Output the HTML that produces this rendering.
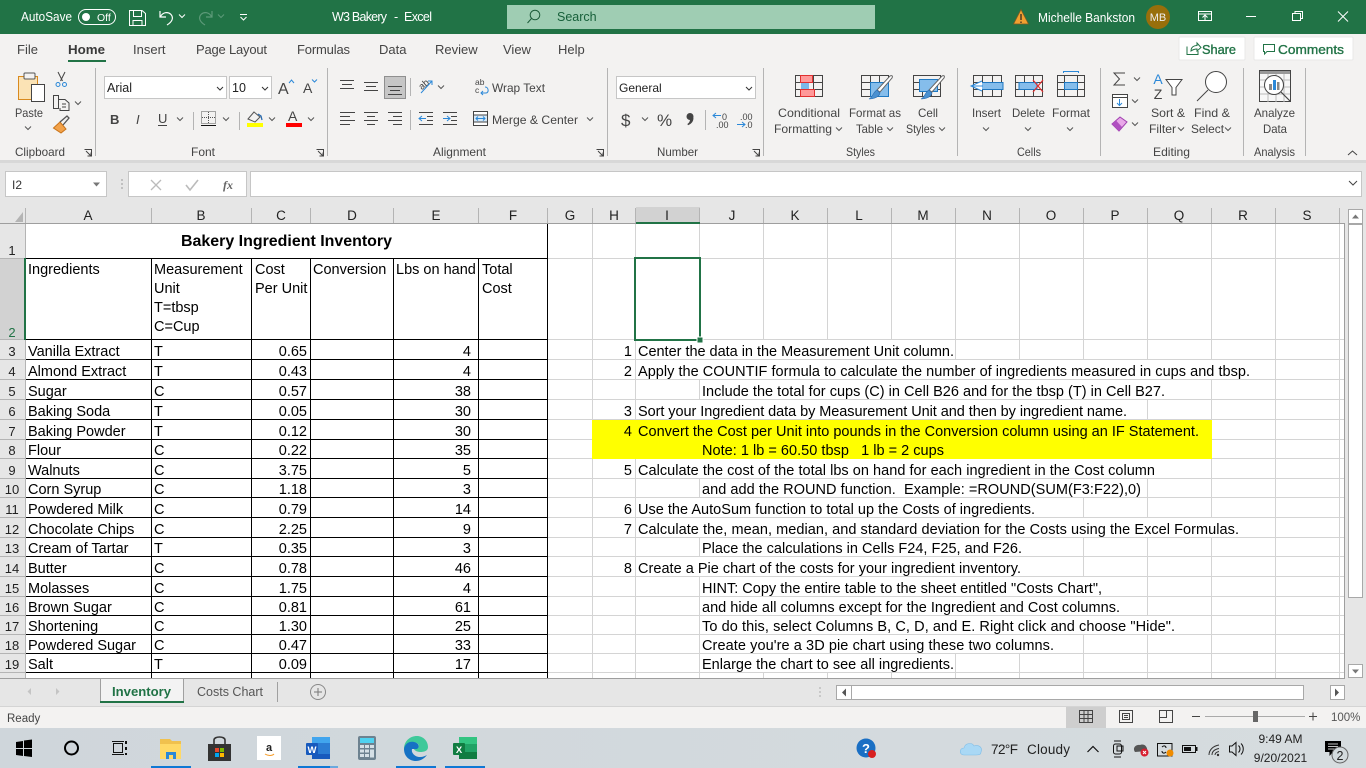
<!DOCTYPE html>
<html lang="en"><head><meta charset="utf-8"><title>W3 Bakery - Excel</title>
<style>
html,body{margin:0;padding:0;width:1366px;height:768px;overflow:hidden;background:#fff}
svg{display:block;position:absolute;left:0;top:0}
text{font-family:"Liberation Sans",sans-serif;white-space:pre}
.c{font-size:14.5px;fill:#000}
.r{text-anchor:end}
.h{font-size:13.5px;fill:#222;text-anchor:middle}
.n{font-size:13px;fill:#222;text-anchor:middle}
.u{font-size:12px;fill:#444}
.m{font-size:12px;fill:#444;text-anchor:middle}
.t{font-size:13px;fill:#444}
.w{font-size:12.5px;fill:#fff}
.ic{fill:none;stroke:#444;stroke-width:1}
.ch{fill:none;stroke:#555;stroke-width:1}
.k{fill:none;stroke:#333;stroke-width:1}
.g{stroke:#d4d4d4;stroke-width:1;shape-rendering:crispEdges}
.b{stroke:#000;stroke-width:1;shape-rendering:crispEdges}
.s{stroke:#b4b4b4;stroke-width:1;shape-rendering:crispEdges}
.bl{fill:none;stroke:#2b88d8;stroke-width:1}
</style></head><body>
<svg width="1366" height="768" viewBox="0 0 1366 768" xmlns="http://www.w3.org/2000/svg">
<defs>
<path id="cv" d="M-3 -1.5L0 1.5L3 -1.5"/>
<linearGradient id="tb" x1="0" x2="1" y1="0" y2="0"><stop offset="0" stop-color="#cfd6db"/><stop offset="1" stop-color="#d6dcdf"/></linearGradient>
</defs>
<!-- Title bar -->
<rect width="1366" height="34" fill="#217346"/>
<text class="w" x="21" y="21" textLength="51" lengthAdjust="spacingAndGlyphs">AutoSave</text>
<rect x="78.5" y="9.5" width="37" height="15" rx="7.5" fill="none" stroke="#fff"/>
<circle cx="86" cy="17" r="4" fill="#fff"/>
<text x="97" y="21" font-size="10.5" fill="#fff">Off</text>
<path d="M129.5 10.5H142L145.5 13.5V25.5H129.5ZM133.5 10.5V16.5H141.5V10.5M133 25.5V20.5H142V25.5" fill="none" stroke="#fff"/>
<path d="M160 11V17H166M160.5 16.5C163 12 168 11.5 171 14.5C174 18 172 22 167 25" fill="none" stroke="#fff" stroke-width="1.2"/>
<use href="#cv" x="182" y="16" fill="none" stroke="#fff"/>
<path d="M212 11V17H206M211.5 16.5C209 12 204 11.5 201 14.5C198 18 200 22 205 25" fill="none" stroke="#5d9a79" stroke-width="1.2"/>
<use href="#cv" x="221" y="16" fill="none" stroke="#5d9a79"/>
<path d="M240 14.5H247" stroke="#fff"/><path d="M240.5 17L243.5 20L246.5 17" fill="none" stroke="#fff"/>
<text x="332" y="21" font-size="12.5" fill="#fff" textLength="55" lengthAdjust="spacing">W3 Bakery</text>
<text x="394" y="21" font-size="12.5" fill="#fff">-</text>
<text x="404" y="21" font-size="12.5" fill="#fff" textLength="28" lengthAdjust="spacing">Excel</text>
<rect x="507" y="5" width="368" height="24" fill="#9fcdb3"/>
<circle cx="535" cy="15" r="4.8" fill="none" stroke="#1d5c3a"/><path d="M531.5 18.5L527.5 23" stroke="#1d5c3a" fill="none"/>
<text x="557" y="21" font-size="12.5" fill="#17603a">Search</text>
<path d="M1021 9.5L1028.5 24H1013.5Z" fill="#f0a030" stroke="#7a5a20" stroke-width=".8"/><path d="M1021 14V20M1021 21.5V23" stroke="#222" stroke-width="1.2"/>
<text class="w" x="1038" y="22" textLength="97" lengthAdjust="spacingAndGlyphs">Michelle Bankston</text>
<circle cx="1158" cy="17" r="12" fill="#986f0b"/><text x="1158" y="21" font-size="11" fill="#eee" text-anchor="middle">MB</text>
<path d="M1198.5 11.5H1211.5V20.5H1198.5ZM1198.5 14H1211.5M1205 20V15.5M1202.5 17.5L1205 15L1207.5 17.5" fill="none" stroke="#fff"/>
<path d="M1246 16.5H1256" stroke="#fff"/>
<path d="M1292.5 13.5H1300.5V20.5H1292.5ZM1295 13V11.5H1302.5V18.5H1301" fill="none" stroke="#fff"/>
<path d="M1338 11.5L1348 21.5M1348 11.5L1338 21.5" stroke="#fff" fill="none"/>
<!-- Ribbon -->
<rect y="34" width="1366" height="126" fill="#f3f2f1"/>
<rect y="160" width="1366" height="45" fill="#e6e6e6"/>
<rect y="160" width="1366" height="3" fill="#d8d8d8"/>
<text class="t" x="17" y="54">File</text>
<text x="68" y="54" font-size="13" font-weight="bold" fill="#3a3a3a" textLength="37" lengthAdjust="spacingAndGlyphs">Home</text>
<rect x="68" y="60" width="38" height="2" fill="#217346"/>
<text class="t" x="133" y="54">Insert</text>
<text class="t" x="196" y="54" textLength="71" lengthAdjust="spacing">Page Layout</text>
<text class="t" x="297" y="54" textLength="53" lengthAdjust="spacing">Formulas</text>
<text class="t" x="379" y="54">Data</text>
<text class="t" x="435" y="54">Review</text>
<text class="t" x="503" y="54">View</text>
<text class="t" x="558" y="54">Help</text>
<rect x="1179" y="37" width="66" height="23" rx="1" fill="#fff" stroke="#e8e8e8"/>
<path d="M1187 46.5V54.5H1198V51M1191 51C1191 47 1194 45.5 1197 45.5V43L1201 47.5L1197 51V49C1195 49 1193 49.5 1191 51Z" fill="none" stroke="#217346"/>
<text x="1202" y="54" font-size="13" fill="#217346" stroke="#217346" stroke-width=".35" textLength="34" lengthAdjust="spacingAndGlyphs">Share</text>
<rect x="1254" y="37" width="99" height="23" rx="1" fill="#fff" stroke="#e8e8e8"/>
<path d="M1263.5 44.5H1274.5V51.5H1267L1264.5 54V51.5H1263.5Z" fill="none" stroke="#217346"/>
<text x="1278" y="54" font-size="13" fill="#217346" stroke="#217346" stroke-width=".35" textLength="66" lengthAdjust="spacingAndGlyphs">Comments</text>
<g class="s"><path d="M95.5 68V156M327.5 68V156M607.5 68V156M763.5 68V156M957.5 68V156M1100.5 68V156M1243.5 68V156M1305.5 68V156"/></g>
<!-- Clipboard -->
<rect x="18.5" y="76.5" width="19" height="23" fill="#fbe3b5" stroke="#d98a1e"/>
<rect x="24" y="73" width="11" height="6" rx="1" fill="#f3f2f1" stroke="#555"/>
<rect x="31.5" y="84.5" width="13" height="17" fill="#fff" stroke="#444"/>
<text class="u" x="15" y="117" textLength="28" lengthAdjust="spacingAndGlyphs">Paste</text>
<use href="#cv" x="28" y="128" class="ch"/>
<path d="M58 72L62.5 81M65 72L60.5 81" class="ic"/><circle cx="58" cy="84.5" r="2" fill="none" stroke="#2b88d8"/><circle cx="64.5" cy="84.5" r="2" fill="none" stroke="#2b88d8"/>
<path d="M53.5 95.5H58.5V108.5H53.5ZM58.5 99.5H65L69 103V110.5H60V108" class="ic"/><path d="M62 104H66M62 107H66" class="ic"/>
<use href="#cv" x="78" y="103" class="ch"/>
<path d="M53.5 128L60 122L66 129L61 133Z" fill="#f2a24a" stroke="#c9741a"/><path d="M60 122L67 116L69 118L63 125" fill="none" stroke="#555" stroke-width="1.3"/>
<text class="u" x="15" y="156" textLength="50" lengthAdjust="spacingAndGlyphs">Clipboard</text>
<path d="M84.5 149.5H91.5V156.5M86 151L91 156M91 152.5V156H87.5" class="ic" stroke-width=".8"/>
<!-- Font -->
<rect x="104.5" y="76.5" width="122" height="22" fill="#fff" stroke="#c6c6c6"/>
<text x="107" y="92" font-size="12.5" fill="#222">Arial</text><use href="#cv" x="220" y="88.5" class="k"/>
<rect x="229.5" y="76.5" width="42" height="22" fill="#fff" stroke="#c6c6c6"/>
<text x="232" y="92" font-size="12.5" fill="#222">10</text><use href="#cv" x="265" y="88.5" class="k"/>
<text x="278" y="94" font-size="16" fill="#444">A</text><path d="M289 83L291.5 80L294 83" fill="none" stroke="#2b88d8"/>
<text x="303" y="93" font-size="14" fill="#444">A</text><path d="M312 79.5L314.5 82L317 79.5" fill="none" stroke="#2b88d8"/>
<text x="110" y="124" font-size="13" font-weight="bold" fill="#444">B</text>
<text x="136" y="124" font-size="13" font-style="italic" fill="#444">I</text>
<text x="158" y="123" font-size="13" fill="#444">U</text><path d="M158 125.5H167" stroke="#444"/><use href="#cv" x="180" y="119" class="ch"/>
<g stroke="#555" stroke-dasharray="1 1" fill="none"><rect x="201.5" y="111.5" width="14" height="12"/><path d="M208.5 112V124M202 117.5H215"/></g><path d="M201 125.5H216" stroke="#111"/><use href="#cv" x="226" y="119" class="ch"/>
<path d="M248 119L254 112L260 117L255 122Z" fill="none" stroke="#555"/><path d="M258 114L261 116L262 120" fill="none" stroke="#2b6cb0" stroke-width="1.3"/>
<rect x="247" y="123" width="16" height="4" fill="#ff0"/><use href="#cv" x="272" y="119" class="ch"/>
<text x="288" y="121" font-size="14" fill="#444">A</text><rect x="286" y="123" width="16" height="4" fill="#f00"/><use href="#cv" x="311" y="119" class="ch"/>
<path d="M193.5 112V130M239.5 112V130" class="s"/>
<text class="u" x="191" y="156" textLength="24" lengthAdjust="spacingAndGlyphs">Font</text>
<path d="M316.5 149.5H323.5V156.5M318 151L323 156M323 152.5V156H319.5" class="ic" stroke-width=".8"/>
<!-- Alignment -->
<g class="ic" stroke="#444"><path d="M340 80.5H354M342 84.5H352M340 88.5H354"/><path d="M364 82.5H378M366 86.5H376M364 90.5H378"/></g>
<rect x="384.5" y="76.5" width="21" height="22" fill="#c6c6c6" stroke="#8f8f8f"/>
<path d="M388 86.5H402M390 90.5H400M388 94.5H402" class="ic"/>
<path d="M410.5 78V96M410.5 110V130" class="s"/>
<text x="418" y="88" font-size="9.5" fill="#444" transform="rotate(-40 423 84)">ab</text><path d="M421 93L432 81M428 81H432V85" fill="none" stroke="#2b88d8"/>
<use href="#cv" x="441" y="87" class="ch"/>
<g class="ic"><path d="M340 112.5H355M340 116.5H350M340 120.5H355M340 124.5H350"/><path d="M364 112.5H378M367 116.5H375M364 120.5H378M367 124.5H375"/><path d="M388 112.5H402M393 116.5H402M388 120.5H402M393 124.5H402"/></g>
<path d="M419 112.5H433M427 116.5H433M427 120.5H433M419 124.5H433M443 112.5H457M451 116.5H457M451 120.5H457M443 124.5H457" class="ic"/>
<path d="M426 118.5H419M422 116L419 118.5L422 121M443 118.5H450M447 116L450 118.5L447 121" fill="none" stroke="#2b88d8"/>
<text x="475" y="85" font-size="8.5" fill="#444">ab</text><text x="475" y="93" font-size="8.5" fill="#444">c</text><path d="M481 93H486C489 93 489 87 485 87" fill="none" stroke="#2b88d8"/><path d="M483 91L481 93L483 95" fill="none" stroke="#2b88d8"/>
<text class="u" x="492" y="92" textLength="53" lengthAdjust="spacingAndGlyphs">Wrap Text</text>
<rect x="473.5" y="111.5" width="14" height="14" fill="#fff" stroke="#444"/><path d="M474 115H487M474 122H487" stroke="#444"/><rect x="474" y="115.5" width="13" height="6" fill="#d6e9f8"/><path d="M476 118.5H485M478 116.5L476 118.5L478 120.5M483 116.5L485 118.5L483 120.5" fill="none" stroke="#2b88d8"/>
<text class="u" x="492" y="124" textLength="86" lengthAdjust="spacingAndGlyphs">Merge &amp; Center</text>
<use href="#cv" x="590" y="119" class="ch"/>
<text class="u" x="433" y="156" textLength="53" lengthAdjust="spacingAndGlyphs">Alignment</text>
<path d="M596.5 149.5H603.5V156.5M598 151L603 156M603 152.5V156H599.5" class="ic" stroke-width=".8"/>
<!-- Number -->
<rect x="616.5" y="76.5" width="139" height="22" fill="#fff" stroke="#c6c6c6"/>
<text x="619" y="92" font-size="12" fill="#222">General</text><use href="#cv" x="749" y="88.5" class="k"/>
<text x="621" y="126" font-size="17" fill="#444">$</text><use href="#cv" x="645" y="119" class="ch"/>
<text x="657" y="126" font-size="17" fill="#444">%</text>
<circle cx="690" cy="116.5" r="3.5" fill="#444"/><path d="M693.4 117.5C693.8 121 691.5 124 688 125.2L687.4 124C689 123 690 121.5 690 119.5Z" fill="#444"/>
<path d="M705.5 110V130" class="s"/>
<text x="722" y="120" font-size="9" fill="#444">0</text><text x="716" y="128" font-size="9" fill="#444">.00</text><path d="M721 115.5H713M716 113L713 115.5L716 118" fill="none" stroke="#2b88d8"/>
<text x="740" y="120" font-size="9" fill="#444">.00</text><text x="745" y="128" font-size="9" fill="#444">.0</text><path d="M737 124.5H745M742 122L745 124.5L742 127" fill="none" stroke="#2b88d8"/>
<text class="u" x="657" y="156" textLength="41" lengthAdjust="spacingAndGlyphs">Number</text>
<path d="M752.5 149.5H759.5V156.5M754 151L759 156M759 152.5V156H755.5" class="ic" stroke-width=".8"/>
<!-- Styles -->
<g fill="none" stroke="#444"><rect x="795.5" y="75.5" width="27" height="21"/><path d="M795 82.5H823M795 89.5H823M804.5 75V97M813.5 75V97"/></g>
<rect x="800.5" y="75.5" width="12" height="7" fill="#f99" stroke="#e03030"/><rect x="800.5" y="89.5" width="14" height="7" fill="#f99" stroke="#e03030"/><rect x="801" y="83" width="8" height="6" fill="#7cb8e8"/>
<text class="m" x="809" y="117" textLength="62" lengthAdjust="spacingAndGlyphs">Conditional</text>
<text class="u" x="774" y="133" textLength="58" lengthAdjust="spacingAndGlyphs">Formatting</text><use href="#cv" x="839" y="129" class="ch"/>
<g fill="none" stroke="#444"><rect x="861.5" y="75.5" width="27" height="21"/><path d="M861 82.5H889M861 89.5H889M870.5 75V97M879.5 75V97"/></g>
<rect x="870.5" y="82.5" width="18" height="14" fill="#85bdeb" stroke="#1f78c1"/>
<path d="M890 76C892 75 893 76 892 78L880 92L877 90Z" fill="#fff" stroke="#666"/><path d="M877 90L880 93C879 97 874 99 869 99C873 97 873 92 877 90Z" fill="#4a90d0" stroke="#2b6cb0" stroke-width=".6"/>
<text class="u" x="849" y="117" textLength="52" lengthAdjust="spacingAndGlyphs">Format as</text>
<text class="u" x="856" y="133" textLength="27" lengthAdjust="spacingAndGlyphs">Table</text><use href="#cv" x="890" y="129" class="ch"/>
<g fill="none" stroke="#444"><rect x="913.5" y="75.5" width="27" height="21"/><path d="M913 82.5H941M913 89.5H941M922.5 89V97M931.5 89V97"/></g>
<rect x="919.5" y="79.5" width="18" height="12" fill="#85bdeb" stroke="#1f78c1"/>
<path d="M942 76C944 75 945 76 944 78L932 92L929 90Z" fill="#fff" stroke="#666"/><path d="M929 90L932 93C931 97 926 99 921 99C925 97 925 92 929 90Z" fill="#4a90d0" stroke="#2b6cb0" stroke-width=".6"/>
<text class="u" x="918" y="117" textLength="20" lengthAdjust="spacingAndGlyphs">Cell</text>
<text class="u" x="906" y="133" textLength="29" lengthAdjust="spacingAndGlyphs">Styles</text><use href="#cv" x="942" y="129" class="ch"/>
<text class="u" x="846" y="156" textLength="29" lengthAdjust="spacingAndGlyphs">Styles</text>
<!-- Cells -->
<g fill="none" stroke="#444"><rect x="973.5" y="75.5" width="28" height="21"/><path d="M973 82.5H1002M973 89.5H1002M982.5 75V97M992.5 75V97"/></g>
<rect x="981" y="82.5" width="22" height="7" fill="#85bdeb" stroke="#1f78c1"/>
<path d="M982 81L971 86L982 91M972 86H983" fill="#fff" stroke="#2b88d8"/>
<text class="u" x="972" y="117" textLength="29" lengthAdjust="spacingAndGlyphs">Insert</text><use href="#cv" x="986" y="129" class="ch"/>
<g fill="none" stroke="#444"><rect x="1015.5" y="75.5" width="27" height="21"/><path d="M1015 82.5H1043M1015 89.5H1043M1024.5 75V97M1033.5 75V97"/></g>
<rect x="1019" y="82.5" width="18" height="7" fill="#85bdeb" stroke="#1f78c1"/>
<path d="M1033 80L1043 92M1043 80L1033 92" stroke="#e03030" fill="none" stroke-width="1.2"/>
<text class="u" x="1012" y="117" textLength="33" lengthAdjust="spacingAndGlyphs">Delete</text><use href="#cv" x="1028" y="129" class="ch"/>
<path d="M1063.5 71V73M1078.5 71V73M1063 71.5H1079" stroke="#2b88d8" fill="none"/>
<g fill="none" stroke="#444"><rect x="1057.5" y="75.5" width="27" height="21"/><path d="M1057 82.5H1085M1057 89.5H1085M1064.5 75V97M1077.5 75V97"/></g>
<rect x="1064.5" y="82.5" width="13" height="7" fill="#85bdeb" stroke="#1f78c1"/>
<text class="u" x="1052" y="117" textLength="38" lengthAdjust="spacingAndGlyphs">Format</text><use href="#cv" x="1070" y="129" class="ch"/>
<text class="u" x="1017" y="156" textLength="24" lengthAdjust="spacingAndGlyphs">Cells</text>
<!-- Editing -->
<path d="M1125 73H1114L1119.5 79L1114 85H1125" fill="none" stroke="#444"/><use href="#cv" x="1137" y="79" class="ch"/>
<rect x="1112.5" y="94.5" width="15" height="13" fill="#fff" stroke="#444"/><path d="M1112 97.5H1128" stroke="#444"/><path d="M1119.5 99V105M1117 103L1119.5 105.5L1122 103" fill="none" stroke="#2b88d8"/><use href="#cv" x="1135" y="101" class="ch"/>
<path d="M1112 124L1120 117L1127 122L1119 131Z" fill="#e8a8e8" stroke="#a040b0"/><path d="M1112 124L1116 120.5L1122 127L1119 131Z" fill="#b050c0"/><use href="#cv" x="1135" y="124" class="ch"/>
<text x="1158" y="84" font-size="14" fill="#2b88d8" text-anchor="middle">A</text><text x="1158" y="99" font-size="14" fill="#444" text-anchor="middle">Z</text>
<path d="M1166 79.5H1182L1176 87.5V95H1172V87.5Z" fill="#fff" stroke="#444"/>
<text class="u" x="1151" y="117" textLength="34" lengthAdjust="spacingAndGlyphs">Sort &amp;</text><text class="u" x="1149" y="133" textLength="27" lengthAdjust="spacingAndGlyphs">Filter</text><use href="#cv" x="1181" y="129" class="ch"/>
<circle cx="1216" cy="82" r="10.5" fill="#fff" stroke="#444"/><path d="M1208 90L1197 101" stroke="#444" fill="none"/>
<text class="u" x="1194" y="117" textLength="36" lengthAdjust="spacingAndGlyphs">Find &amp;</text><text class="u" x="1191" y="133" textLength="33" lengthAdjust="spacingAndGlyphs">Select</text><use href="#cv" x="1228" y="129" class="ch"/>
<text class="u" x="1153" y="156" textLength="37" lengthAdjust="spacingAndGlyphs">Editing</text>
<!-- Analysis -->
<rect x="1259.5" y="70.5" width="31" height="31" fill="#f7f7f7" stroke="#444"/><rect x="1260" y="71" width="30" height="3" fill="#999"/>
<path d="M1260 80H1290M1260 87H1290M1260 94H1290M1268 74V102M1276 74V102M1284 74V102" stroke="#bbb" fill="none"/>
<circle cx="1274" cy="85" r="9.5" fill="#fff" stroke="#444"/><rect x="1269" y="84" width="3" height="6" fill="#888"/><rect x="1273" y="80" width="3" height="10" fill="#2b88d8"/><rect x="1277" y="82" width="2.5" height="8" fill="#888"/>
<path d="M1281 92L1290 101" stroke="#444" fill="none" stroke-width="1.2"/>
<text class="u" x="1254" y="117" textLength="41" lengthAdjust="spacingAndGlyphs">Analyze</text><text class="u" x="1263" y="133" textLength="24" lengthAdjust="spacingAndGlyphs">Data</text>
<text class="u" x="1254" y="156" textLength="41" lengthAdjust="spacingAndGlyphs" style="letter-spacing:0">Analysis</text>
<path d="M1348 155L1352.5 151L1357 155" fill="none" stroke="#444"/>
<!-- Formula bar -->
<rect x="5.5" y="171.5" width="101" height="25" fill="#fff" stroke="#c6c6c6"/>
<text x="12" y="189" font-size="12" fill="#333">I2</text>
<path d="M93 182.5H100L96.5 186.5Z" fill="#777"/>
<path d="M122 179V181M122 183V185M122 187V189" stroke="#999"/>
<rect x="128.5" y="171.5" width="118" height="25" fill="#fff" stroke="#c6c6c6"/>
<path d="M151 180L161 190M161 180L151 190" stroke="#bbb" stroke-width="1.3" fill="none"/>
<path d="M186 185L190 190L198 180" stroke="#bbb" stroke-width="1.6" fill="none"/>
<text x="223" y="189" font-size="12" font-style="italic" fill="#666" font-weight="bold" style="font-family:'Liberation Serif',serif">fx</text>
<rect x="250.5" y="171.5" width="1111" height="25" fill="#fff" stroke="#c6c6c6"/>
<path d="M1349 181L1353 185L1357 181" fill="none" stroke="#444"/>
<!-- Sheet background -->
<rect x="0" y="205" width="1366" height="523" fill="#e6e6e6"/>
<rect x="25" y="224" width="1320" height="454" fill="#fff"/>
<!-- headers -->
<rect x="636" y="207" width="64" height="16" fill="#d2d2d2"/>
<rect x="0" y="258" width="25" height="82" fill="#d2d2d2"/>
<path d="M15 222L23 222L23 212Z" fill="#b4b4b4"/>
<g class="s"><path d="M25.5 208V223M151.5 208V223M251.5 208V223M310.5 208V223M393.5 208V223M478.5 208V223M547.5 208V223M592.5 208V223M635.5 208V223M699.5 208V223M763.5 208V223M827.5 208V223M891.5 208V223M955.5 208V223M1019.5 208V223M1083.5 208V223M1147.5 208V223M1211.5 208V223M1275.5 208V223M1339.5 208V223"/>
<path d="M25.5 224V678M0 258.5H25M0 339.5H25M0 359.5H25M0 379.5H25M0 399.5H25M0 419.5H25M0 439.5H25M0 458.5H25M0 478.5H25M0 497.5H25M0 517.5H25M0 537.5H25M0 556.5H25M0 576.5H25M0 596.5H25M0 615.5H25M0 634.5H25M0 653.5H25M0 672.5H25"/></g>
<path d="M0 223.5H1344.5V678.5H0" fill="none" stroke="#9e9e9e" shape-rendering="crispEdges"/>
<rect x="24" y="258" width="2" height="82" fill="#217346"/>
<rect x="636" y="222" width="64" height="2" fill="#217346"/>
<text class="h" x="88" y="220">A</text><text class="h" x="201" y="220">B</text><text class="h" x="281" y="220">C</text><text class="h" x="352" y="220">D</text><text class="h" x="436" y="220">E</text><text class="h" x="513" y="220">F</text><text class="h" x="570" y="220">G</text><text class="h" x="614" y="220">H</text><text class="h" x="667" y="220">I</text><text class="h" x="732" y="220">J</text><text class="h" x="795" y="220">K</text><text class="h" x="859" y="220">L</text><text class="h" x="923" y="220">M</text><text class="h" x="987" y="220">N</text><text class="h" x="1051" y="220">O</text><text class="h" x="1115" y="220">P</text><text class="h" x="1179" y="220">Q</text><text class="h" x="1243" y="220">R</text><text class="h" x="1307" y="220">S</text>
<text class="n" x="12" y="255">1</text><text class="n" x="12" y="337" style="fill:#217346">2</text><text class="n" x="12" y="356">3</text><text class="n" x="12" y="376">4</text><text class="n" x="12" y="396">5</text><text class="n" x="12" y="416">6</text><text class="n" x="12" y="436">7</text><text class="n" x="12" y="455">8</text><text class="n" x="12" y="475">9</text><text class="n" x="12" y="494">10</text><text class="n" x="12" y="514">11</text><text class="n" x="12" y="534">12</text><text class="n" x="12" y="553">13</text><text class="n" x="12" y="573">14</text><text class="n" x="12" y="593">15</text><text class="n" x="12" y="612">16</text><text class="n" x="12" y="631">17</text><text class="n" x="12" y="650">18</text><text class="n" x="12" y="669">19</text>
<!-- Right gridlines -->
<g class="g"><path d="M592.5 224V678M635.5 224V678M699.5 224V678M763.5 224V678M827.5 224V678M891.5 224V678M955.5 224V678M1019.5 224V678M1083.5 224V678M1147.5 224V678M1211.5 224V678M1275.5 224V678M1339.5 224V678"/>
<path d="M548 258.5H1344M548 339.5H1344M548 359.5H1344M548 379.5H1344M548 399.5H1344M548 419.5H1344M548 439.5H1344M548 458.5H1344M548 478.5H1344M548 497.5H1344M548 517.5H1344M548 537.5H1344M548 556.5H1344M548 576.5H1344M548 596.5H1344M548 615.5H1344M548 634.5H1344M548 653.5H1344M548 672.5H1344"/></g>
<!-- overflow covers -->
<g fill="#fff"><rect x="636" y="340" width="319" height="19"/><rect x="636" y="360" width="639" height="19"/><rect x="700" y="380" width="511" height="19"/><rect x="636" y="400" width="511" height="19"/><rect x="636" y="459" width="575" height="19"/><rect x="700" y="479" width="447" height="18"/><rect x="636" y="498" width="447" height="19"/><rect x="636" y="518" width="639" height="19"/><rect x="700" y="538" width="383" height="18"/><rect x="636" y="557" width="447" height="19"/><rect x="700" y="577" width="447" height="19"/><rect x="700" y="597" width="447" height="18"/><rect x="700" y="616" width="511" height="18"/><rect x="700" y="635" width="383" height="18"/><rect x="700" y="654" width="255" height="18"/></g>
<rect x="592" y="420" width="620" height="39" fill="#ff0"/>
<!-- Table lines -->
<g class="b"><path d="M26 258.5H548M26 339.5H548M26 359.5H548M26 379.5H548M26 399.5H548M26 419.5H548M26 439.5H548M26 458.5H548M26 478.5H548M26 497.5H548M26 517.5H548M26 537.5H548M26 556.5H548M26 576.5H548M26 596.5H548M26 615.5H548M26 634.5H548M26 653.5H548M26 672.5H548"/>
<path d="M547.5 224V678M151.5 258V678M251.5 258V678M310.5 258V678M393.5 258V678M478.5 258V678"/></g>
<!-- selected cell -->
<rect x="635" y="258" width="65" height="82" fill="#fff" stroke="#217346" stroke-width="2"/>
<rect x="697" y="337" width="6" height="6" fill="#217346" stroke="#fff" stroke-width="1"/>
<!-- Table text -->
<text x="286.5" y="246" font-size="16" font-weight="bold" fill="#000" text-anchor="middle" textLength="211" lengthAdjust="spacingAndGlyphs">Bakery Ingredient Inventory</text>
<text class="c" x="28" y="274">Ingredients</text>
<text class="c" x="154" y="274">Measurement</text><text class="c" x="154" y="293">Unit</text><text class="c" x="154" y="312">T=tbsp</text><text class="c" x="154" y="331">C=Cup</text>
<text class="c" x="255" y="274">Cost</text><text class="c" x="255" y="293">Per Unit</text>
<text class="c" x="313" y="274">Conversion</text><text class="c" x="396" y="274">Lbs on hand</text>
<text class="c" x="482" y="274">Total</text><text class="c" x="482" y="293">Cost</text>
<g class="c">
<text class="c" x="28" y="356">Vanilla Extract</text><text class="c" x="154" y="356">T</text><text class="c r" x="307" y="356">0.65</text><text class="c r" x="471" y="356">4</text>
<text class="c" x="28" y="376">Almond Extract</text><text class="c" x="154" y="376">T</text><text class="c r" x="307" y="376">0.43</text><text class="c r" x="471" y="376">4</text>
<text class="c" x="28" y="396">Sugar</text><text class="c" x="154" y="396">C</text><text class="c r" x="307" y="396">0.57</text><text class="c r" x="471" y="396">38</text>
<text class="c" x="28" y="416">Baking Soda</text><text class="c" x="154" y="416">T</text><text class="c r" x="307" y="416">0.05</text><text class="c r" x="471" y="416">30</text>
<text class="c" x="28" y="436">Baking Powder</text><text class="c" x="154" y="436">T</text><text class="c r" x="307" y="436">0.12</text><text class="c r" x="471" y="436">30</text>
<text class="c" x="28" y="455">Flour</text><text class="c" x="154" y="455">C</text><text class="c r" x="307" y="455">0.22</text><text class="c r" x="471" y="455">35</text>
<text class="c" x="28" y="475">Walnuts</text><text class="c" x="154" y="475">C</text><text class="c r" x="307" y="475">3.75</text><text class="c r" x="471" y="475">5</text>
<text class="c" x="28" y="494">Corn Syrup</text><text class="c" x="154" y="494">C</text><text class="c r" x="307" y="494">1.18</text><text class="c r" x="471" y="494">3</text>
<text class="c" x="28" y="514">Powdered Milk</text><text class="c" x="154" y="514">C</text><text class="c r" x="307" y="514">0.79</text><text class="c r" x="471" y="514">14</text>
<text class="c" x="28" y="534">Chocolate Chips</text><text class="c" x="154" y="534">C</text><text class="c r" x="307" y="534">2.25</text><text class="c r" x="471" y="534">9</text>
<text class="c" x="28" y="553">Cream of Tartar</text><text class="c" x="154" y="553">T</text><text class="c r" x="307" y="553">0.35</text><text class="c r" x="471" y="553">3</text>
<text class="c" x="28" y="573">Butter</text><text class="c" x="154" y="573">C</text><text class="c r" x="307" y="573">0.78</text><text class="c r" x="471" y="573">46</text>
<text class="c" x="28" y="593">Molasses</text><text class="c" x="154" y="593">C</text><text class="c r" x="307" y="593">1.75</text><text class="c r" x="471" y="593">4</text>
<text class="c" x="28" y="612">Brown Sugar</text><text class="c" x="154" y="612">C</text><text class="c r" x="307" y="612">0.81</text><text class="c r" x="471" y="612">61</text>
<text class="c" x="28" y="631">Shortening</text><text class="c" x="154" y="631">C</text><text class="c r" x="307" y="631">1.30</text><text class="c r" x="471" y="631">25</text>
<text class="c" x="28" y="650">Powdered Sugar</text><text class="c" x="154" y="650">C</text><text class="c r" x="307" y="650">0.47</text><text class="c r" x="471" y="650">33</text>
<text class="c" x="28" y="669">Salt</text><text class="c" x="154" y="669">T</text><text class="c r" x="307" y="669">0.09</text><text class="c r" x="471" y="669">17</text>
</g>
<!-- Instructions -->
<text class="c r" x="632" y="356">1</text><text class="c" x="638" y="356" textLength="316" lengthAdjust="spacing">Center the data in the Measurement Unit column.</text>
<text class="c r" x="632" y="376">2</text><text class="c" x="638" y="376" textLength="612" lengthAdjust="spacing">Apply the COUNTIF formula to calculate the number of ingredients measured in cups and tbsp.</text>
<text class="c" x="702" y="396" textLength="463" lengthAdjust="spacing">Include the total for cups (C) in Cell B26 and for the tbsp (T) in Cell B27.</text>
<text class="c r" x="632" y="416">3</text><text class="c" x="638" y="416" textLength="489" lengthAdjust="spacing">Sort your Ingredient data by Measurement Unit and then by ingredient name.</text>
<text class="c r" x="632" y="436">4</text><text class="c" x="638" y="436" textLength="561" lengthAdjust="spacing">Convert the Cost per Unit into pounds in the Conversion column using an IF Statement.</text>
<text class="c" x="702" y="455" textLength="242" lengthAdjust="spacing">Note: 1 lb = 60.50 tbsp   1 lb = 2 cups</text>
<text class="c r" x="632" y="475">5</text><text class="c" x="638" y="475" textLength="517" lengthAdjust="spacing">Calculate the cost of the total lbs on hand for each ingredient in the Cost column</text>
<text class="c" x="702" y="494" textLength="439" lengthAdjust="spacing">and add the ROUND function.  Example: =ROUND(SUM(F3:F22),0)</text>
<text class="c r" x="632" y="514">6</text><text class="c" x="638" y="514" textLength="397" lengthAdjust="spacing">Use the AutoSum function to total up the Costs of ingredients.</text>
<text class="c r" x="632" y="534">7</text><text class="c" x="638" y="534" textLength="601" lengthAdjust="spacing">Calculate the, mean, median, and standard deviation for the Costs using the Excel Formulas.</text>
<text class="c" x="702" y="553" textLength="320" lengthAdjust="spacing">Place the calculations in Cells F24, F25, and F26.</text>
<text class="c r" x="632" y="573">8</text><text class="c" x="638" y="573" textLength="383" lengthAdjust="spacing">Create a Pie chart of the costs for your ingredient inventory.</text>
<text class="c" x="702" y="593" textLength="400" lengthAdjust="spacing">HINT: Copy the entire table to the sheet entitled "Costs Chart",</text>
<text class="c" x="702" y="612" textLength="418" lengthAdjust="spacing">and hide all columns except for the Ingredient and Cost columns.</text>
<text class="c" x="702" y="631" textLength="473" lengthAdjust="spacing">To do this, select Columns B, C, D, and E. Right click and choose "Hide".</text>
<text class="c" x="702" y="650" textLength="352" lengthAdjust="spacing">Create you're a 3D pie chart using these two columns.</text>
<text class="c" x="702" y="669" textLength="252" lengthAdjust="spacing">Enlarge the chart to see all ingredients.</text>
<!-- Vertical scrollbar -->
<rect x="1345" y="205" width="21" height="523" fill="#e6e6e6"/>
<rect x="1348.5" y="209.5" width="14" height="14" fill="#fff" stroke="#a8a8a8"/><path d="M1352 218.5L1355.5 214.5L1359 218.5Z" fill="#777"/>
<rect x="1348.5" y="224.5" width="14" height="373" fill="#fff" stroke="#a8a8a8"/>
<rect x="1348.5" y="664.5" width="14" height="13" fill="#fff" stroke="#a8a8a8"/><path d="M1352 669.5L1355.5 673.5L1359 669.5Z" fill="#777"/>
<!-- Bottom tabs -->
<rect y="679" width="1345" height="27" fill="#e6e6e6"/>
<path d="M31 688L27.5 691.5L31 695Z M56 688L59.5 691.5L56 695Z" fill="#c4c4c4"/>
<path d="M100.5 702V678.5H183.5V702" fill="#f3f3f3" stroke="#a0a0a0"/>
<rect x="100" y="701" width="84" height="2" fill="#217346"/>
<text x="112" y="696" font-size="12.5" font-weight="bold" fill="#217346" textLength="59" lengthAdjust="spacingAndGlyphs">Inventory</text>
<text x="197" y="696" font-size="12.5" fill="#555" textLength="66" lengthAdjust="spacingAndGlyphs">Costs Chart</text>
<path d="M277.5 682V702" stroke="#a0a0a0"/>
<circle cx="318" cy="692" r="7.5" fill="none" stroke="#888"/><path d="M318 688V696M314 692H322" stroke="#777"/>
<path d="M820 687V689M820 691V693M820 695V697" stroke="#aaa"/>
<rect x="836.5" y="685.5" width="15" height="14" fill="#fff" stroke="#a8a8a8"/><path d="M846 688.5L842 692.5L846 696.5Z" fill="#555"/>
<rect x="851.5" y="685.5" width="452" height="14" fill="#fff" stroke="#a8a8a8"/>
<rect x="1330.5" y="685.5" width="14" height="14" fill="#fff" stroke="#a8a8a8"/><path d="M1335 688.5L1339 692.5L1335 696.5Z" fill="#555"/>
<!-- Status bar -->
<rect y="706" width="1366" height="22" fill="#f3f2f1"/>
<path d="M0 706.5H1366" stroke="#d4d4d4"/>
<text x="7" y="722" font-size="11.5" fill="#444">Ready</text>
<rect x="1066" y="707" width="40" height="21" fill="#cecece"/>
<g fill="none" stroke="#444"><rect x="1079.5" y="710.5" width="13" height="12"/><path d="M1079 714.5H1093M1079 718.5H1093M1084 711V722M1088 711V722"/>
<rect x="1119.5" y="710.5" width="13" height="12"/><rect x="1122.5" y="713.5" width="7" height="6"/><path d="M1124 715.5H1128M1124 717.5H1128"/>
<path d="M1159.5 710.5H1172.5V722.5H1159.5ZM1166.5 711V717.5H1160"/></g>
<path d="M1192 716.5H1200" stroke="#444"/>
<path d="M1205 716.5H1305" stroke="#aaa"/><rect x="1253" y="711" width="5" height="11" fill="#666"/>
<path d="M1309 716.5H1317M1313 712.5V720.5" stroke="#444"/>
<text x="1331" y="721" font-size="11.5" fill="#555">100%</text>
<!-- Taskbar -->
<rect y="728" width="1366" height="40" fill="url(#tb)"/>
<path d="M16 742L23 741V748H16ZM24 740.5L32 739.5V748H24ZM16 749H23V756L16 755ZM24 749H32V757L24 756Z" fill="#000"/>
<circle cx="71.5" cy="748" r="6.5" fill="none" stroke="#000" stroke-width="2"/>
<g fill="none" stroke="#111"><rect x="113.5" y="743.5" width="9" height="9"/><path d="M112 741.5H124M112 754.5H124"/><path d="M126 741V744M126 747V750M126 753V755" stroke-width="2"/></g>
<path d="M160 739H170L172 741H181V759H160Z" fill="#f0c14e"/><rect x="160" y="744" width="21" height="15" fill="#ffd966"/><rect x="166" y="752" width="10" height="7" fill="#2b88d8"/><rect x="169" y="755" width="4" height="4" fill="#ffd966"/>
<path d="M208 744H231V761H208Z" fill="#333"/><path d="M214 744V740C214 736 225 736 225 740V744" fill="none" stroke="#333" stroke-width="1.6"/>
<rect x="215" y="748" width="4" height="4" fill="#e8452c"/><rect x="220" y="748" width="4" height="4" fill="#7fba00"/><rect x="215" y="753" width="4" height="4" fill="#00a4ef"/><rect x="220" y="753" width="4" height="4" fill="#ffb900"/>
<rect x="257" y="736" width="24" height="24" fill="#fff"/><text x="269" y="751" font-size="11" font-weight="bold" fill="#222" text-anchor="middle">a</text><path d="M265 754C268 756 272 756 274 754" stroke="#f59a23" fill="none"/>
<rect x="312" y="737" width="18" height="22" rx="1" fill="#2b7cd3"/><rect x="312" y="737" width="18" height="6" fill="#41a5ee"/><rect x="312" y="754" width="18" height="5" fill="#185abd"/><rect x="306" y="743" width="12" height="12" rx="1" fill="#185abd"/><text x="312" y="753" font-size="9.5" font-weight="bold" fill="#fff" text-anchor="middle">W</text>
<rect x="358" y="736" width="18" height="24" rx="2" fill="#6d8290"/><rect x="360" y="738" width="14" height="5" fill="#4fd2f0"/>
<g fill="#d5e0e6"><rect x="360" y="745" width="4" height="3"/><rect x="365" y="745" width="4" height="3"/><rect x="370" y="745" width="4" height="3"/><rect x="360" y="749.5" width="4" height="3"/><rect x="365" y="749.5" width="4" height="3"/><rect x="370" y="749.5" width="4" height="8"/><rect x="360" y="754" width="4" height="3"/><rect x="365" y="754" width="4" height="3"/></g>
<path d="M404 749C404 741 410 736 417 736C423 736 428 741 428 747C428 751 424 752 420 752C417 752 414 750 414 749C418 749 420 746 418 744C415 741 409 743 407 746C406 748 405 749 404 749Z" fill="#3ec99a"/>
<path d="M404 749C405 743 410 741 414 742C419 743 420 747 417 749H412C411 753 415 757 420 757C423 757 425 756 427 755C424 759 420 761 416 761C409 761 404 756 404 749Z" fill="#1672c4"/>
<rect x="459" y="737" width="18" height="22" rx="1" fill="#21a366"/><rect x="459" y="737" width="18" height="7" fill="#33c481"/><rect x="459" y="752" width="18" height="7" fill="#107c41"/><rect x="453" y="743" width="12" height="12" rx="1" fill="#107c41"/><text x="459" y="753" font-size="9.5" font-weight="bold" fill="#fff" text-anchor="middle">X</text>
<rect x="151" y="766" width="40" height="2" fill="#0f78d4"/><rect x="298" y="766" width="32" height="2" fill="#0f78d4"/><rect x="330" y="766" width="8" height="2" fill="#6aa9de"/><rect x="396" y="766" width="40" height="2" fill="#0f78d4"/><rect x="445" y="766" width="40" height="2" fill="#0f78d4"/>
<circle cx="866" cy="748" r="9.5" fill="#1a6fc4"/><text x="866" y="753" font-size="13" font-weight="bold" fill="#fff" text-anchor="middle">?</text><circle cx="872" cy="754" r="4" fill="#d82020"/>
<path d="M964 755C959 755 959 748 964 748C965 743 972 742 974 746C979 744 983 748 981 752C981 755 978 755 976 755Z" fill="#a9d8f5" stroke="#7fbde8" stroke-width=".6"/>
<text x="991" y="754" font-size="13.5" fill="#222" textLength="27" lengthAdjust="spacing">72°F</text>
<text x="1027" y="754" font-size="13.5" fill="#222" textLength="43" lengthAdjust="spacing">Cloudy</text>
<path d="M1087.5 752L1093 746.5L1098.5 752" fill="none" stroke="#111" stroke-width="1.2"/>
<path d="M1114 741H1121M1114 757H1121" stroke="#111" fill="none"/><rect x="1113.5" y="744" width="8" height="10" rx="2" fill="none" stroke="#111"/><rect x="1117" y="746" width="6" height="5" fill="none" stroke="#111"/>
<path d="M1135 752C1132 748 1136 744 1140 745C1144 743 1148 747 1147 751Z" fill="#555"/><circle cx="1144.5" cy="752.5" r="4" fill="#d81e30"/><path d="M1143 751L1146 754M1146 751L1143 754" stroke="#fff" fill="none"/>
<path d="M1157.5 743.5H1172V756H1157.5ZM1162 747C1164 745 1166 746 1166 748M1166 752C1164 754 1162 753 1162 751" fill="none" stroke="#111"/><circle cx="1170" cy="753" r="3.5" fill="#f08c00"/>
<rect x="1182.5" y="745.5" width="13" height="7" fill="none" stroke="#111"/><rect x="1184" y="747" width="7" height="4" fill="#111"/><rect x="1196" y="747" width="1.5" height="4" fill="#111"/>
<path d="M1209 755C1209 750 1213 746 1219 745M1212 755C1212 752 1214 749.5 1219 748.5M1215 755C1215 753 1216.5 752 1219 751.5" fill="none" stroke="#333"/><circle cx="1218" cy="755" r="1.2" fill="#333"/>
<path d="M1229.5 746H1232L1236 742.5V755.5L1232 752H1229.5ZM1238.5 745.5C1240.5 747.5 1240.5 750.5 1238.5 752.5M1241 743.5C1244 746.5 1244 751.5 1241 754.5" fill="none" stroke="#111"/>
<text x="1280.5" y="743" font-size="12" fill="#222" text-anchor="middle">9:49 AM</text>
<text x="1280.5" y="762" font-size="12" fill="#222" text-anchor="middle">9/20/2021</text>
<path d="M1325 741H1341V752H1333L1329.5 756V752H1325Z" fill="#000"/><path d="M1328 744H1338M1328 746.5H1338M1328 749H1336" stroke="#fff" stroke-width=".8"/>
<circle cx="1340" cy="755" r="8" fill="#d3dadd" stroke="#666"/><text x="1340" y="760" font-size="12.5" fill="#222" text-anchor="middle">2</text>
</svg>
</body></html>
